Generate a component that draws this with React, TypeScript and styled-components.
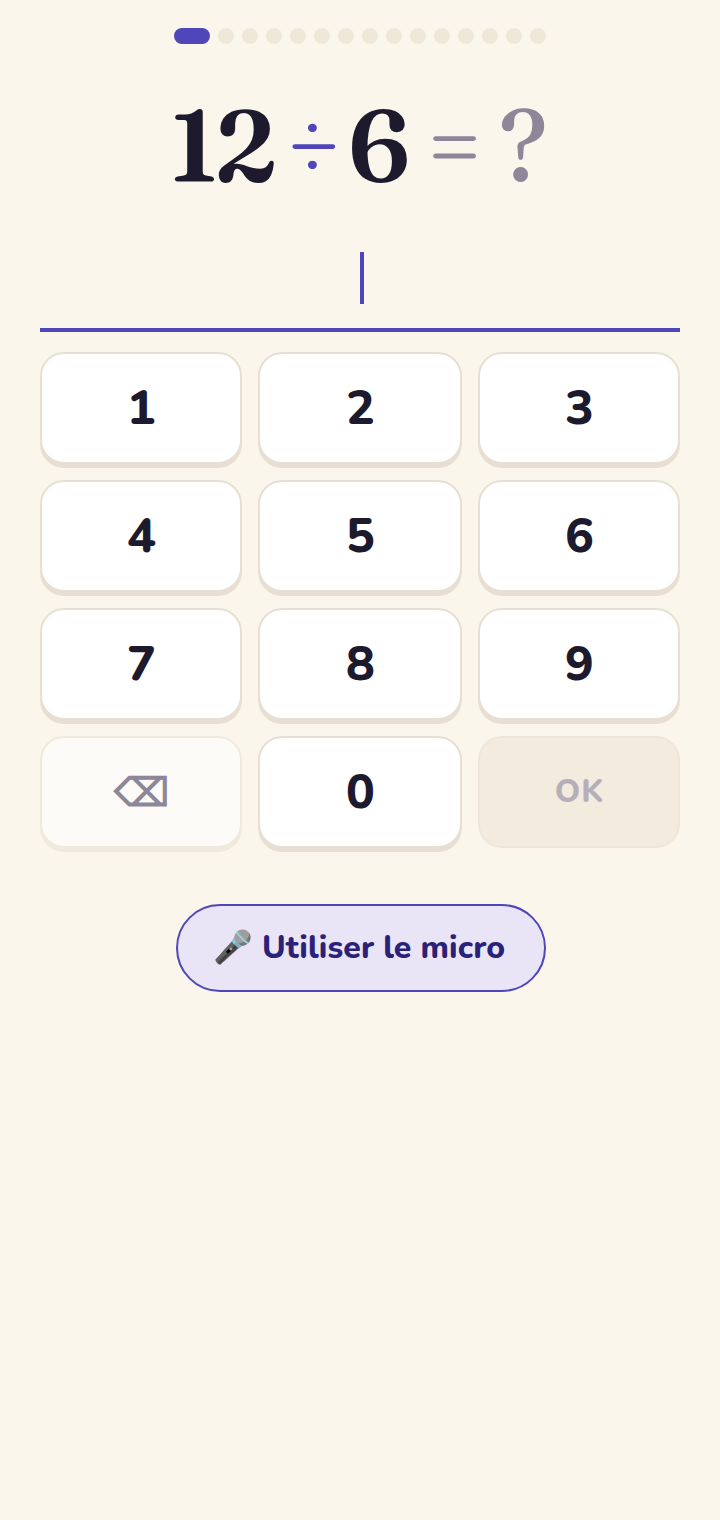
import React from "react";
import styled, { createGlobalStyle } from "styled-components";

const Global = createGlobalStyle`
  html, body { margin: 0; padding: 0; background: #fbf6ec; }
  body { font-family: "Nunito", "Lato", "Noto Sans", sans-serif; }
`;
const Page = styled.main`
  width: 720px; height: 1520px; box-sizing: border-box; padding: 28px 40px 0;
  display: flex; flex-direction: column; align-items: center; background: #fbf6ec;
`;
const Progress = styled.div`display: flex; gap: 8px; height: 16px;`;
const Dot = styled.span<{ $active?: boolean }>`
  display: block; height: 16px; border-radius: 8px;
  width: ${p => (p.$active ? 36 : 16)}px;
  background: ${p => (p.$active ? "#4f46ba" : "#efe7d8")};
`;
const Equation = styled.div`
  margin-top: 43px; height: 116px; padding-right: 2px; display: flex; align-items: center; justify-content: center;
  font-family: "Fraunces", "Liberation Serif", serif; font-size: 100px; line-height: 116px; font-weight: 600;
  font-variation-settings: "opsz" 144, "SOFT" 0, "WONK" 0;
`;
const Operand = styled.span`color: #1d1a2e; letter-spacing: -3px;`;
const Operator = styled.span<{ $muted?: boolean }>`
  color: ${p => (p.$muted ? "#8e8799" : "#4f46ba")};
  font-weight: 400;
  margin: 0 ${p => (p.$muted ? 14 : 7)}px 0 ${p => (p.$muted ? 19 : 12)}px;
`;
const Unknown = styled.span`color: #8e8799; font-weight: 500; margin-left: 2px;`;
const Answer = styled.div`
  align-self: stretch; margin-top: 45px; height: 84px; box-sizing: border-box;
  border-bottom: 4px solid #4f46ba; display: flex; justify-content: center; align-items: flex-start; padding: 4px 0 0 4px;
`;
const Caret = styled.span`display: block; width: 4px; height: 52px; background: #4f46ba;`;
const Keypad = styled.div`
  align-self: stretch; margin-top: 20px; display: grid; grid-template-columns: 202px 204px 202px; gap: 16px;
`;
const Key = styled.button<{ $kind?: "digit" | "erase" | "ok" }>`
  height: 112px; box-sizing: border-box; border-radius: 24px; padding: 0 0 0 1px; display: flex; align-items: center; justify-content: center;
  font-family: inherit; font-weight: 800; font-size: 48px; line-height: 1;
  border: 2px solid ${p => (p.$kind === "ok" ? "#efe6d9" : p.$kind === "erase" ? "#f0e9de" : "#e7dfd2")};
  background: ${p => (p.$kind === "ok" ? "#f4ebdf" : p.$kind === "erase" ? "#fdfbf8" : "#ffffff")};
  color: ${p => (p.$kind === "ok" ? "#b5afb9" : p.$kind === "erase" ? "#8e8799" : "#1d1a2e")};
  box-shadow: ${p => (p.$kind === "ok" ? "none" : p.$kind === "erase" ? "0 4px 0 #f0e9de" : "0 4px 0 #e7dfd2")};
  ${p => (p.$kind === "ok" ? "font-size: 32px; letter-spacing: 1px;" : "")}
  ${p => (p.$kind === "erase" ? "font-size: 39px; font-weight: 800; padding-top: 2px;" : "")}
`;
const Mic = styled.button`
  margin: 56px 0 0 2px; width: 370px; height: 88px; box-sizing: border-box; border-radius: 44px;
  border: 2px solid #4f46ba; background: #e9e5f6; color: #2b2178;
  font-family: inherit; font-size: 32px; font-weight: 800; padding: 0 4px 2px 0; letter-spacing: 0.1px;
  display: flex; align-items: center; justify-content: center;
`;

export default function App() {
  return (
    <Page>
      <Global />
      <Progress>
        {Array.from({ length: 15 }, (_, i) => <Dot key={i} $active={i === 0} />)}
      </Progress>
      <Equation>
        <Operand>12</Operand><Operator>÷</Operator><Operand>6</Operand>
        <Operator $muted>=</Operator><Unknown>?</Unknown>
      </Equation>
      <Answer><Caret /></Answer>
      <Keypad>
        {["1","2","3","4","5","6","7","8","9"].map(d => <Key key={d}>{d}</Key>)}
        <Key $kind="erase">⌫</Key>
        <Key>0</Key>
        <Key $kind="ok">OK</Key>
      </Keypad>
      <Mic>🎤 Utiliser le micro</Mic>
    </Page>
  );
}
